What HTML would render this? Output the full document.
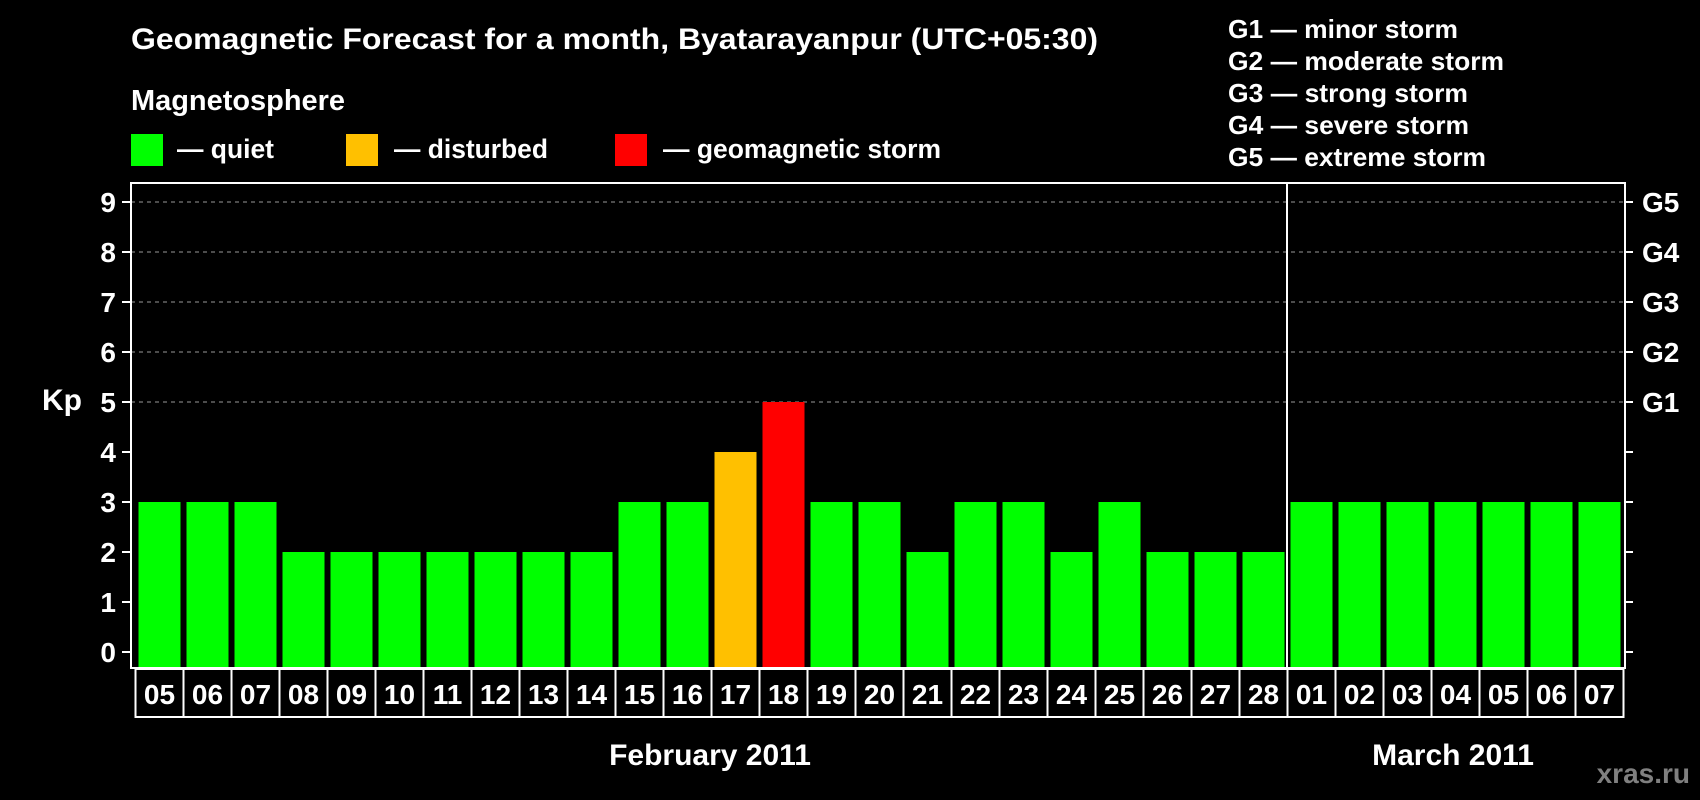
<!DOCTYPE html>
<html><head><meta charset="utf-8"><style>
html,body{margin:0;padding:0;background:#000;width:1700px;height:800px;overflow:hidden}
svg{display:block}
text{font-family:"Liberation Sans",Arial,sans-serif;font-weight:bold;fill:#fff}
</style></head><body>
<svg width="1700" height="800" viewBox="0 0 1700 800" xmlns="http://www.w3.org/2000/svg">
<rect width="1700" height="800" fill="#000"/>
<text x="131" y="49" font-size="30" textLength="967" lengthAdjust="spacingAndGlyphs">Geomagnetic Forecast for a month, Byatarayanpur (UTC+05:30)</text>
<text x="131" y="110" font-size="29" textLength="214" lengthAdjust="spacingAndGlyphs">Magnetosphere</text>
<rect x="131" y="134" width="32" height="32" fill="#00ff00"/>
<text x="177" y="158" font-size="27" textLength="97" lengthAdjust="spacingAndGlyphs">— quiet</text>
<rect x="346" y="134" width="32" height="32" fill="#ffc000"/>
<text x="394" y="158" font-size="27" textLength="154" lengthAdjust="spacingAndGlyphs">— disturbed</text>
<rect x="615" y="134" width="32" height="32" fill="#ff0000"/>
<text x="663" y="158" font-size="27" textLength="278" lengthAdjust="spacingAndGlyphs">— geomagnetic storm</text>
<g font-size="26">
<text x="1228" y="38" textLength="230" lengthAdjust="spacingAndGlyphs">G1 — minor storm</text>
<text x="1228" y="70" textLength="276" lengthAdjust="spacingAndGlyphs">G2 — moderate storm</text>
<text x="1228" y="102" textLength="240" lengthAdjust="spacingAndGlyphs">G3 — strong storm</text>
<text x="1228" y="134" textLength="241" lengthAdjust="spacingAndGlyphs">G4 — severe storm</text>
<text x="1228" y="166" textLength="258" lengthAdjust="spacingAndGlyphs">G5 — extreme storm</text>
</g>
<g stroke="#999" stroke-width="1" stroke-dasharray="4,4">
<line x1="131" x2="1625" y1="202" y2="202"/>
<line x1="131" x2="1625" y1="252" y2="252"/>
<line x1="131" x2="1625" y1="302" y2="302"/>
<line x1="131" x2="1625" y1="352" y2="352"/>
<line x1="131" x2="1625" y1="402" y2="402"/>
</g>
<g id="bars"></g>
<rect x="131" y="183" width="1494" height="485" fill="none" stroke="#fff" stroke-width="2"/>
<line x1="1287" x2="1287" y1="183" y2="668" stroke="#fff" stroke-width="2"/>
<g stroke="#fff" stroke-width="2">
<line x1="122" x2="131" y1="202" y2="202"/><line x1="122" x2="131" y1="252" y2="252"/>
<line x1="122" x2="131" y1="302" y2="302"/><line x1="122" x2="131" y1="352" y2="352"/>
<line x1="122" x2="131" y1="402" y2="402"/><line x1="122" x2="131" y1="452" y2="452"/>
<line x1="122" x2="131" y1="502" y2="502"/><line x1="122" x2="131" y1="552" y2="552"/>
<line x1="122" x2="131" y1="602" y2="602"/><line x1="122" x2="131" y1="652" y2="652"/>
<line x1="1625" x2="1633" y1="202" y2="202"/><line x1="1625" x2="1633" y1="252" y2="252"/>
<line x1="1625" x2="1633" y1="302" y2="302"/><line x1="1625" x2="1633" y1="352" y2="352"/>
<line x1="1625" x2="1633" y1="402" y2="402"/><line x1="1625" x2="1633" y1="452" y2="452"/>
<line x1="1625" x2="1633" y1="502" y2="502"/><line x1="1625" x2="1633" y1="552" y2="552"/>
<line x1="1625" x2="1633" y1="602" y2="602"/><line x1="1625" x2="1633" y1="652" y2="652"/>
</g>
<g font-size="28" text-anchor="end">
<text x="116" y="212">9</text><text x="116" y="262">8</text><text x="116" y="312">7</text>
<text x="116" y="362">6</text><text x="116" y="412">5</text><text x="116" y="462">4</text>
<text x="116" y="512">3</text><text x="116" y="562">2</text><text x="116" y="612">1</text>
<text x="116" y="662">0</text>
</g>
<text x="42" y="410" font-size="30">Kp</text>
<g font-size="28">
<text x="1642" y="212">G5</text><text x="1642" y="262">G4</text><text x="1642" y="312">G3</text>
<text x="1642" y="362">G2</text><text x="1642" y="412">G1</text>
</g>
<g id="labels"></g>
<text x="710" y="765" font-size="30" text-anchor="middle">February 2011</text>
<text x="1453" y="765" font-size="30" text-anchor="middle">March 2011</text>
<text x="1690" y="783" font-size="28" text-anchor="end" style="fill:#808080">xras.ru</text>
<script>
(function(){
var d=["05","06","07","08","09","10","11","12","13","14","15","16","17","18","19","20","21","22","23","24","25","26","27","28","01","02","03","04","05","06","07"];
var v=[3,3,3,2,2,2,2,2,2,2,3,3,4,5,3,3,2,3,3,2,3,2,2,2,3,3,3,3,3,3,3];
var ns="http://www.w3.org/2000/svg",b=document.getElementById("bars"),l=document.getElementById("labels");
for(var i=0;i<31;i++){
 var x=135.5+48*i;
 var r=document.createElementNS(ns,"rect");
 var top=652-50*v[i];
 r.setAttribute("x",x+3);r.setAttribute("width",42);r.setAttribute("y",top);r.setAttribute("height",668-top);
 r.setAttribute("fill",v[i]==4?"#ffc000":v[i]>=5?"#ff0000":"#00ff00");
 b.appendChild(r);
 var c=document.createElementNS(ns,"rect");
 c.setAttribute("x",x);c.setAttribute("y",669);c.setAttribute("width",48);c.setAttribute("height",48);
 c.setAttribute("fill","none");c.setAttribute("stroke","#fff");c.setAttribute("stroke-width","2");
 l.appendChild(c);
 var t=document.createElementNS(ns,"text");
 t.setAttribute("x",x+24);t.setAttribute("y",704);t.setAttribute("font-size","28");t.setAttribute("text-anchor","middle");
 t.textContent=d[i];l.appendChild(t);
}
})();
</script>
</svg>
</body></html>
